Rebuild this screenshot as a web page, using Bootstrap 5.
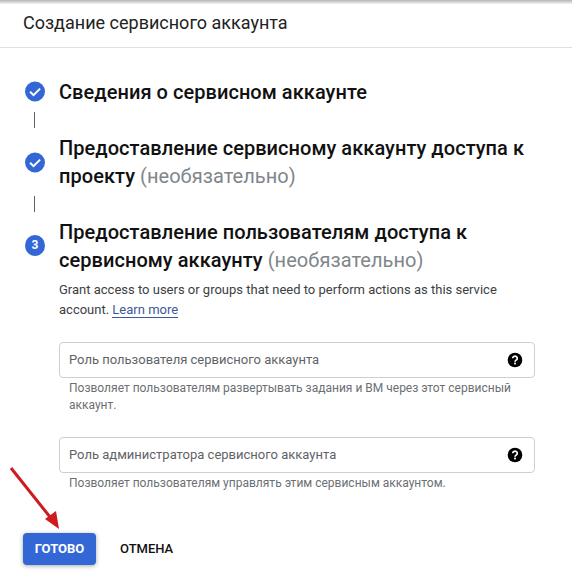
<!DOCTYPE html>
<html lang="ru">
<head>
  <meta charset="UTF-8" />
  <meta name="viewport" content="width=device-width, initial-scale=1.0"/>
  <title>Создание сервисного аккаунта</title>
  <link href="https://cdn.jsdelivr.net/npm/bootstrap@5.3.3/dist/css/bootstrap.min.css" rel="stylesheet">
  <style>
    html, body { height: 571px; overflow: hidden; }
    body {
      margin: 0;
      background: #fff;
      font-family: Roboto, "Liberation Sans", sans-serif;
      color: #202124;
      position: relative;
    }
    .top-shade {
      height: 4px;
      background: linear-gradient(#b4b4b4, #f4f4f4);
    }
    .page-head {
      height: 44px;
      padding: 6px 0 0 23px;
      border-bottom: 1px solid #e0e0e0;
      font-size: 18px;
      line-height: 26px;
      color: #222;
    }
    .steps { padding: 30px 24px 0 24px; }
    .step-row { display: flex; }
    .step-mark {
      flex: 0 0 35px;
      display: flex;
      align-items: flex-start;
    }
    .mark-first { padding-top: 3px; }
    .mark-third { padding-top: 17px; padding-left: 1px; }
    .step-num {
      width: 20px;
      height: 21px;
      border-radius: 50%;
      background: #3367d6;
      color: #fff;
      font-size: 12px;
      font-weight: 700;
      line-height: 21px;
      text-align: center;
    }
    .step-title {
      font-size: 20px;
      font-weight: 500;
      line-height: 28px;
      letter-spacing: .05px;
      color: #111;
      margin: 0;
    }
    .step-opt { font-weight: 400; color: #80868b; }
    .step-line {
      width: 1px;
      height: 16px;
      background: #5f6368;
      margin: 6px 0 6px 10px;
    }
    .step-text {
      font-size: 13px;
      line-height: 20px;
      color: #3c4043;
      margin: 6px 0 0;
    }
    .step-text a {
      color: #3c5a99;
      text-decoration: none;
      border-bottom: 1px solid #3c5a99;
    }
    .role-box {
      display: flex;
      align-items: center;
      justify-content: space-between;
      height: 36px;
      width: 476px;
      padding: 0 11px 0 9px;
      border: 1px solid #cfcfd2;
      border-radius: 4px;
      font-size: 13px;
      color: #5f6368;
    }
    .role-first { margin-top: 22px; }
    .role-next { margin-top: 23px; }
    .role-help {
      font-size: 12px;
      line-height: 17px;
      color: #6b6f73;
      padding-left: 10px;
      margin-top: 2px;
      width: 476px;
    }
    .form-actions { margin: 41px 0 0 -1px; }
    .btn-done {
      background: #3367d6;
      color: #fff;
      border: 0;
      border-radius: 4px;
      width: 73px;
      height: 32px;
      padding: 0;
      font-size: 13px;
      font-weight: 700;
      box-shadow: 0 1px 4px rgba(60, 64, 67, .45);
    }
    .btn-cancel {
      background: none;
      border: 0;
      padding: 0;
      color: #111;
      font-size: 13px;
      font-weight: 500;
      line-height: 32px;
    }
    .red-arrow { position: absolute; left: 8px; top: 465px; }
  </style>
</head>
<body>

<div class="top-shade"></div>
<div class="page-head">Создание сервисного аккаунта</div>

<div class="steps">
  <div class="step-row">
    <div class="step-mark mark-first">
      <svg width="21" height="21" viewBox="0 0 21 21"><circle cx="11" cy="10.5" r="10" fill="#3367d6"/><path d="M6.1 10.8l3.4 3.4 6.6-6.6" fill="none" stroke="#fff" stroke-width="2"/></svg>
    </div>
    <h2 class="step-title">Сведения о сервисном аккаунте</h2>
  </div>
  <div class="step-line"></div>

  <div class="step-row">
    <div class="step-mark align-items-center">
      <svg width="21" height="21" viewBox="0 0 21 21"><circle cx="11" cy="10.5" r="10" fill="#3367d6"/><path d="M6.1 10.8l3.4 3.4 6.6-6.6" fill="none" stroke="#fff" stroke-width="2"/></svg>
    </div>
    <h2 class="step-title">Предоставление сервисному аккаунту доступа к проекту <span class="step-opt">(необязательно)</span></h2>
  </div>
  <div class="step-line"></div>

  <div class="step-row">
    <div class="step-mark mark-third">
      <div class="step-num">3</div>
    </div>
    <div>
      <h2 class="step-title">Предоставление пользователям доступа к сервисному аккаунту <span class="step-opt">(необязательно)</span></h2>
      <p class="step-text">Grant access to users or groups that need to perform actions as this service account. <a href="#">Learn more</a></p>

      <div class="role-box role-first">
        <span>Роль пользователя сервисного аккаунта</span>
        <svg width="16" height="16" viewBox="0 0 16 16"><circle cx="8" cy="8" r="7.3" fill="#000"/><path d="M5.7 6.3a2.3 2.1 0 1 1 3.5 1.8c-.8.5-1.2.9-1.2 1.6" fill="none" stroke="#fff" stroke-width="1.7"/><rect x="7.1" y="10.6" width="1.8" height="1.8" fill="#fff"/></svg>
      </div>
      <div class="role-help">Позволяет пользователям развертывать задания и ВМ через этот сервисный аккаунт.</div>

      <div class="role-box role-next">
        <span>Роль администратора сервисного аккаунта</span>
        <svg width="16" height="16" viewBox="0 0 16 16"><circle cx="8" cy="8" r="7.3" fill="#000"/><path d="M5.7 6.3a2.3 2.1 0 1 1 3.5 1.8c-.8.5-1.2.9-1.2 1.6" fill="none" stroke="#fff" stroke-width="1.7"/><rect x="7.1" y="10.6" width="1.8" height="1.8" fill="#fff"/></svg>
      </div>
      <div class="role-help">Позволяет пользователям управлять этим сервисным аккаунтом.</div>
    </div>
  </div>

  <div class="form-actions d-flex align-items-center gap-4">
    <button class="btn-done">ГОТОВО</button>
    <button class="btn-cancel">ОТМЕНА</button>
  </div>
</div>

<svg class="red-arrow" width="56" height="68" viewBox="0 0 56 68">
  <path d="M3 3L46 57" fill="none" stroke="#cf1a1f" stroke-width="3"/>
  <path d="M51 64L37 54L48 46Z" fill="#cf1a1f"/>
</svg>

</body>
</html>
